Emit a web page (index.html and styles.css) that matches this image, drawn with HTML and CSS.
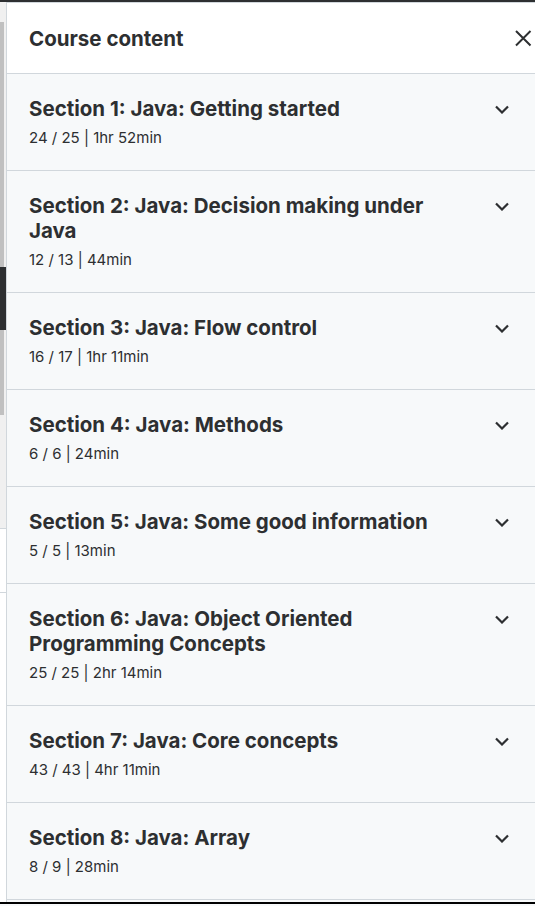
FILE: index.html
```html
<!DOCTYPE html>
<html lang="en">
<head>
<meta charset="utf-8">
<title>Course content</title>
<link rel="stylesheet" href="styles.css">
</head>
<body>
<div class="topline"></div>
<div class="frame">
  <div class="strip">
    <div class="s-light s-a"></div>
    <div class="s-track s-b"></div>
    <div class="s-dark"></div>
    <div class="s-track s-c"></div>
    <div class="s-light s-d"></div>
    <div class="s-white s-e"></div>
    <div class="s-white s-f"></div>
  </div>
  <aside class="panel">
    <header class="panel-head">
      <h2 class="panel-title">Course content</h2>
      <button class="close" aria-label="Close">
        <svg width="18" height="18" viewBox="0 0 18 18"><path d="M2 2L16.5 16.5M16.5 2L2 16.5" stroke="#2d2f31" stroke-width="2" fill="none"/></svg>
      </button>
    </header>
    <div class="sections">
      <div class="section"><div class="sec-text"><div class="sec-title">Section 1: Java: Getting started</div><div class="sec-meta">24 / 25 | 1hr 52min</div></div><svg class="chev" width="14" height="9" viewBox="0 0 14 9"><path d="M1 1.5L7 7.5L13 1.5" stroke="#2d2f31" stroke-width="2.2" fill="none"/></svg></div>
      <div class="section"><div class="sec-text"><div class="sec-title">Section 2: Java: Decision making under Java</div><div class="sec-meta">12 / 13 | 44min</div></div><svg class="chev" width="14" height="9" viewBox="0 0 14 9"><path d="M1 1.5L7 7.5L13 1.5" stroke="#2d2f31" stroke-width="2.2" fill="none"/></svg></div>
      <div class="section"><div class="sec-text"><div class="sec-title">Section 3: Java: Flow control</div><div class="sec-meta">16 / 17 | 1hr 11min</div></div><svg class="chev" width="14" height="9" viewBox="0 0 14 9"><path d="M1 1.5L7 7.5L13 1.5" stroke="#2d2f31" stroke-width="2.2" fill="none"/></svg></div>
      <div class="section"><div class="sec-text"><div class="sec-title">Section 4: Java: Methods</div><div class="sec-meta">6 / 6 | 24min</div></div><svg class="chev" width="14" height="9" viewBox="0 0 14 9"><path d="M1 1.5L7 7.5L13 1.5" stroke="#2d2f31" stroke-width="2.2" fill="none"/></svg></div>
      <div class="section"><div class="sec-text"><div class="sec-title">Section 5: Java: Some good information</div><div class="sec-meta">5 / 5 | 13min</div></div><svg class="chev" width="14" height="9" viewBox="0 0 14 9"><path d="M1 1.5L7 7.5L13 1.5" stroke="#2d2f31" stroke-width="2.2" fill="none"/></svg></div>
      <div class="section"><div class="sec-text"><div class="sec-title">Section 6: Java: Object Oriented Programming Concepts</div><div class="sec-meta">25 / 25 | 2hr 14min</div></div><svg class="chev" width="14" height="9" viewBox="0 0 14 9"><path d="M1 1.5L7 7.5L13 1.5" stroke="#2d2f31" stroke-width="2.2" fill="none"/></svg></div>
      <div class="section"><div class="sec-text"><div class="sec-title">Section 7: Java: Core concepts</div><div class="sec-meta">43 / 43 | 4hr 11min</div></div><svg class="chev" width="14" height="9" viewBox="0 0 14 9"><path d="M1 1.5L7 7.5L13 1.5" stroke="#2d2f31" stroke-width="2.2" fill="none"/></svg></div>
      <div class="section"><div class="sec-text"><div class="sec-title">Section 8: Java: Array</div><div class="sec-meta">8 / 9 | 28min</div></div><svg class="chev" width="14" height="9" viewBox="0 0 14 9"><path d="M1 1.5L7 7.5L13 1.5" stroke="#2d2f31" stroke-width="2.2" fill="none"/></svg></div>
    </div>
  </aside>
</div>
<div class="bottomline"></div>
</body>
</html>
```
FILE: styles.css
```css
html, body {
  margin: 0;
  padding: 0;
  height: 906px;
  overflow: hidden;
  background: #f7f9fa;
  font-family: Inter, "Noto Sans", sans-serif;
  color: #2d2f31;
}
.topline {
  height: 2px;
  background: #2d2f31;
}
.frame {
  display: flex;
  height: 902px;
}
.strip {
  width: 6px;
  flex: none;
  display: flex;
  flex-direction: column;
  background: #f0f0f0;
}
.s-a { height: 20px; }
.s-track { background: linear-gradient(to right, #c0c0c0 0 4px, #f0f0f0 4px); }
.s-b { height: 245px; }
.s-dark { height: 63px; background: #2d2f31; }
.s-c { height: 85px; }
.s-d { height: 113px; }
.s-e { height: 63px; background: #fff; border-top: 1px solid #d1d7dc; }
.s-f { flex: 1; background: #fff; border-top: 1px solid #d1d7dc; }
.panel {
  flex: 1;
  border-left: 1px solid #d1d7dc;
  border-top: 1px solid #d1d7dc;
  display: flex;
  flex-direction: column;
  background: #f7f9fa;
}
.panel-head {
  height: 71px;
  box-sizing: border-box;
  flex: none;
  background: #fff;
  border-bottom: 1px solid #d1d7dc;
  display: flex;
  align-items: center;
  justify-content: space-between;
  padding: 0 3px 0 22px;
}
.panel-title {
  margin: 0;
  font-size: 20.5px;
  font-weight: 700;
}
.close {
  background: none;
  border: 0;
  padding: 0;
  width: 18px;
  height: 18px;
  display: flex;
  align-items: center;
  justify-content: center;
}
.section {
  display: flex;
  align-items: flex-start;
  gap: 16px;
  padding: 22px 26px 22px 22px;
  border-bottom: 1px solid #d1d7dc;
}
.sec-text { flex: 1; }
.sec-title {
  font-size: 20.5px;
  font-weight: 700;
  line-height: 25px;
  max-width: 420px;
}
.sec-meta {
  margin-top: 7px;
  font-size: 15px;
  line-height: 20px;
}
.chev { flex: none; margin-top: 9px; }
.bottomline {
  height: 2px;
  background: #000;
  margin-top: -2px;
  position: relative;
}
```
